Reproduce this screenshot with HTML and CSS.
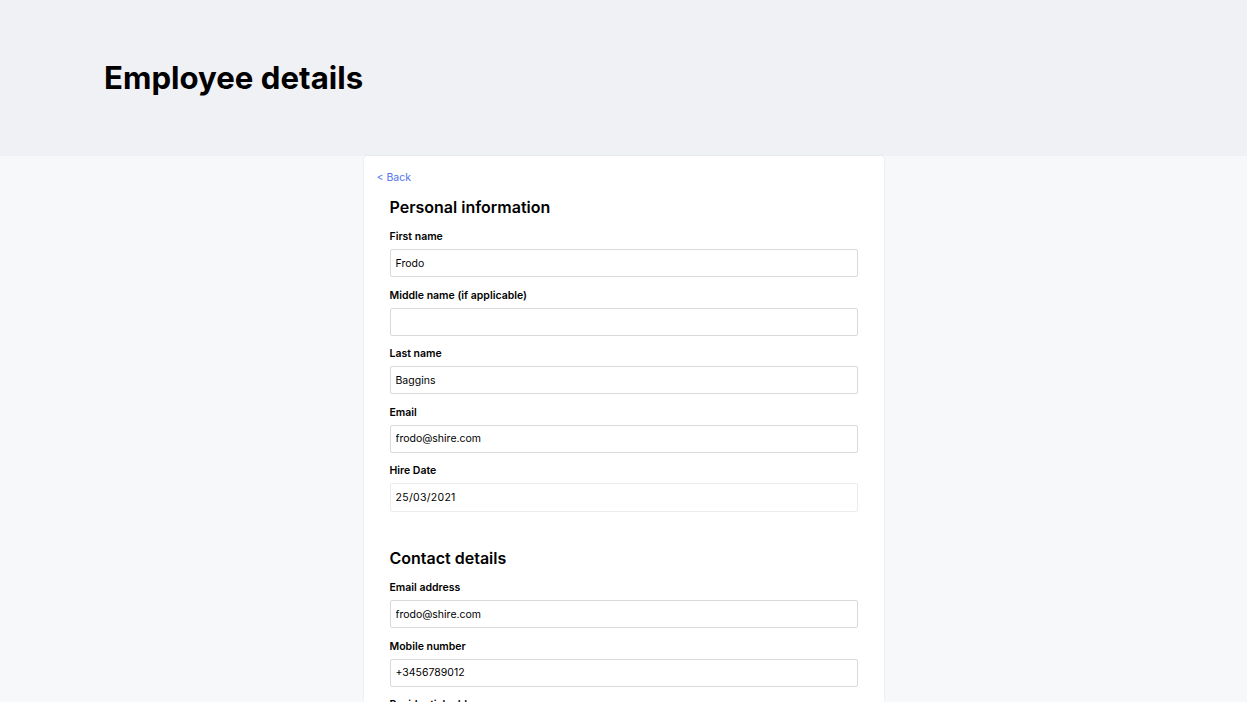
FILE: index.html
```html
<!DOCTYPE html>
<html>
<head>
<meta charset="utf-8">
<link rel="stylesheet" href="styles.css">
</head>
<body>
<header class="page-header">
  <h1 class="page-title">Employee details</h1>
</header>
<main class="page-body">
  <div class="card">
    <a class="back" href="#">&lt; Back</a>
    <form class="form">
      <section class="section">
        <h2 class="section-title">Personal information</h2>
        <div class="field">
          <label class="label">First name</label>
          <input class="input" type="text" value="Frodo">
        </div>
        <div class="field">
          <label class="label">Middle name (if applicable)</label>
          <input class="input" type="text" value="">
        </div>
        <div class="field">
          <label class="label">Last name</label>
          <input class="input" type="text" value="Baggins">
        </div>
        <div class="field">
          <label class="label">Email</label>
          <input class="input" type="text" value="frodo@shire.com">
        </div>
        <div class="field">
          <label class="label">Hire Date</label>
          <input class="input input-date" type="text" value="25/03/2021" readonly>
        </div>
      </section>
      <section class="section">
        <h2 class="section-title">Contact details</h2>
        <div class="field">
          <label class="label">Email address</label>
          <input class="input" type="text" value="frodo@shire.com">
        </div>
        <div class="field">
          <label class="label">Mobile number</label>
          <input class="input" type="text" value="+3456789012">
        </div>
        <div class="field">
          <label class="label">Residential address</label>
          <input class="input" type="text" value="">
        </div>
      </section>
    </form>
  </div>
</main>
</body>
</html>
```
FILE: styles.css
```css
* { box-sizing: border-box; }
html, body { margin: 0; padding: 0; }
body {
  font-family: Inter, "Noto Sans", sans-serif;
  background: #f7f8fa;
  color: #000;
}
.page-header {
  background: #f0f1f5;
  height: 156px;
  padding: 59px 0 0 104px;
}
.page-title {
  margin: 0;
  font-size: 31.2px;
  font-weight: 700;
  line-height: 38px;
}
.page-body {
  display: flex;
  justify-content: center;
}
.card {
  width: 520px;
  background: #fff;
  border-radius: 4px 4px 0 0;
  box-shadow: 0 0 3px rgba(0,0,0,0.08);
  padding: 9px 13px 40px;
  min-height: 700px;
}
.back {
  display: inline-block;
  font-size: 10.5px;
  line-height: 14px;
  color: #5073f0;
  text-decoration: none;
}
.form {
  padding: 0 13px;
}
.section {
  margin-top: 12px;
}
.section + .section {
  margin-top: 36px;
}
.section-title {
  margin: 0 0 13px;
  font-size: 16px;
  font-weight: 600;
  line-height: 20px;
}
.field {
  margin-bottom: 11.5px;
}
.label {
  display: block;
  font-size: 10.5px;
  font-weight: 600;
  line-height: 13px;
  margin-bottom: 6px;
}
.input {
  display: block;
  width: 100%;
  height: 28px;
  border: 1px solid #d9d9d9;
  border-radius: 2px;
  padding: 0 5px;
  font-family: Inter, "Noto Sans", sans-serif;
  font-size: 10.5px;
  color: #000;
  background: #fff;
  outline: none;
}
.input-date {
  border-color: #ececec;
  height: 29px;
  letter-spacing: 0.3px;
}
```
